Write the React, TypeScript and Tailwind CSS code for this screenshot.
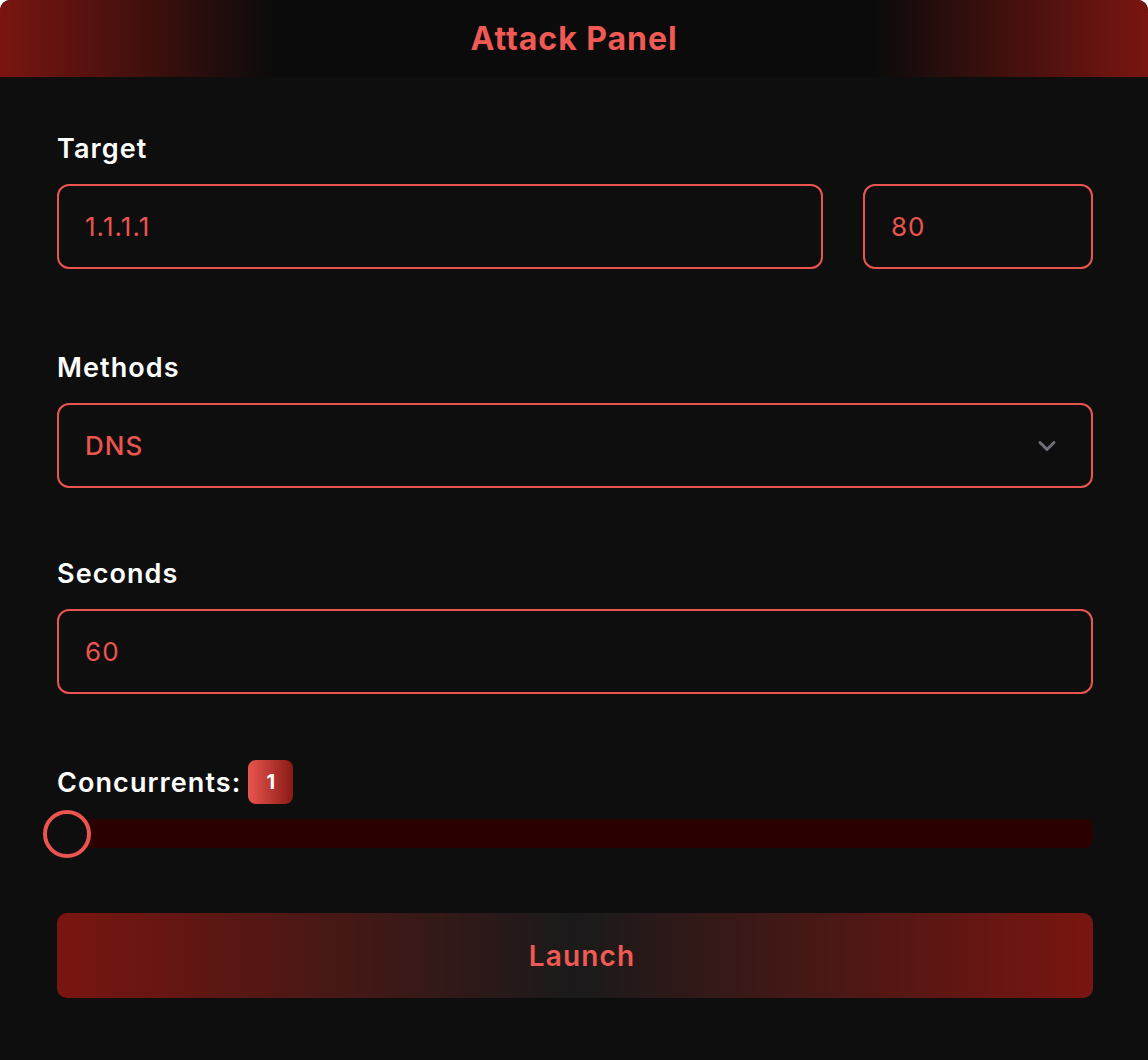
import { ChevronDown } from "lucide-react";

const font = { fontFamily: "Inter, 'Noto Sans', sans-serif" };

function Label({ children }: { children: React.ReactNode }) {
	return <div className="text-[27px] font-semibold text-white leading-none tracking-[0.04em]">{children}</div>;
}

function Field({ value, className = "" }: { value: string; className?: string }) {
	return (
		<div
			className={`h-[85px] rounded-[12px] border-2 border-[#ea5550] bg-[#0e0e0e] flex items-center px-[26px] text-[26px] tracking-[0.04em] text-[#ea5550] ${className}`}
		>
			{value}
		</div>
	);
}

export default function App() {
	return (
		<div className="w-[1148px] h-[1060px] bg-[#0e0e0e] rounded-t-[10px] overflow-hidden" style={font}>
			<div className="h-[77px] bg-[linear-gradient(90deg,#7a1510_0%,#0b0b0b_24%,#0b0b0b_76%,#7a1510_100%)] flex items-center justify-center">
				<h1 className="text-[32px] font-bold text-[#ef5a55] tracking-[0.03em]">Attack Panel</h1>
			</div>

			<div className="pl-[57px] pr-[55px] pt-[58px] flex flex-col">
				<Label>Target</Label>
				<div className="mt-[22px] flex gap-[40px]">
					<Field value="1.1.1.1" className="flex-1" />
					<Field value="80" className="w-[230px]" />
				</div>

				<div className="mt-[85px]">
					<Label>Methods</Label>
				</div>
				<div className="mt-[22px] h-[85px] rounded-[12px] border-2 border-[#ea5550] flex items-center justify-between pl-[26px] pr-[30px] text-[26px] tracking-[0.04em] text-[#ea5550] font-medium">
					<span>DNS</span>
					<ChevronDown className="w-[28px] h-[28px] text-[#70707c]" strokeWidth={2.5} />
				</div>

				<div className="mt-[72px]">
					<Label>Seconds</Label>
				</div>
				<Field value="60" className="mt-[22px]" />

				<div className="mt-[66px] flex items-center gap-[7px]">
					<Label>Concurrents:</Label>
					<div className="w-[45px] h-[44px] rounded-[8px] bg-[linear-gradient(90deg,#ea5550,#8a1a14)] flex items-center justify-center text-white text-[20px] font-bold">
						1
					</div>
				</div>

				<div className="relative mt-[6px] h-[46px] flex items-center">
					<div className="h-[29px] w-full rounded-r-[8px] bg-[#2a0000] ml-[10px]" />
					<div className="absolute left-[-14px] top-0 w-[48px] h-[48px] rounded-full border-[4px] border-[#ea5550] bg-[#0e0e0e]" />
				</div>

				<button className="mt-[57px] h-[85px] pl-[14px] rounded-[10px] bg-[linear-gradient(90deg,#7a1510_0%,#1a1a1a_50%,#7a1510_100%)] text-[28px] font-semibold tracking-[0.04em] text-[#ef5a55]">
					Launch
				</button>
			</div>
		</div>
	);
}
